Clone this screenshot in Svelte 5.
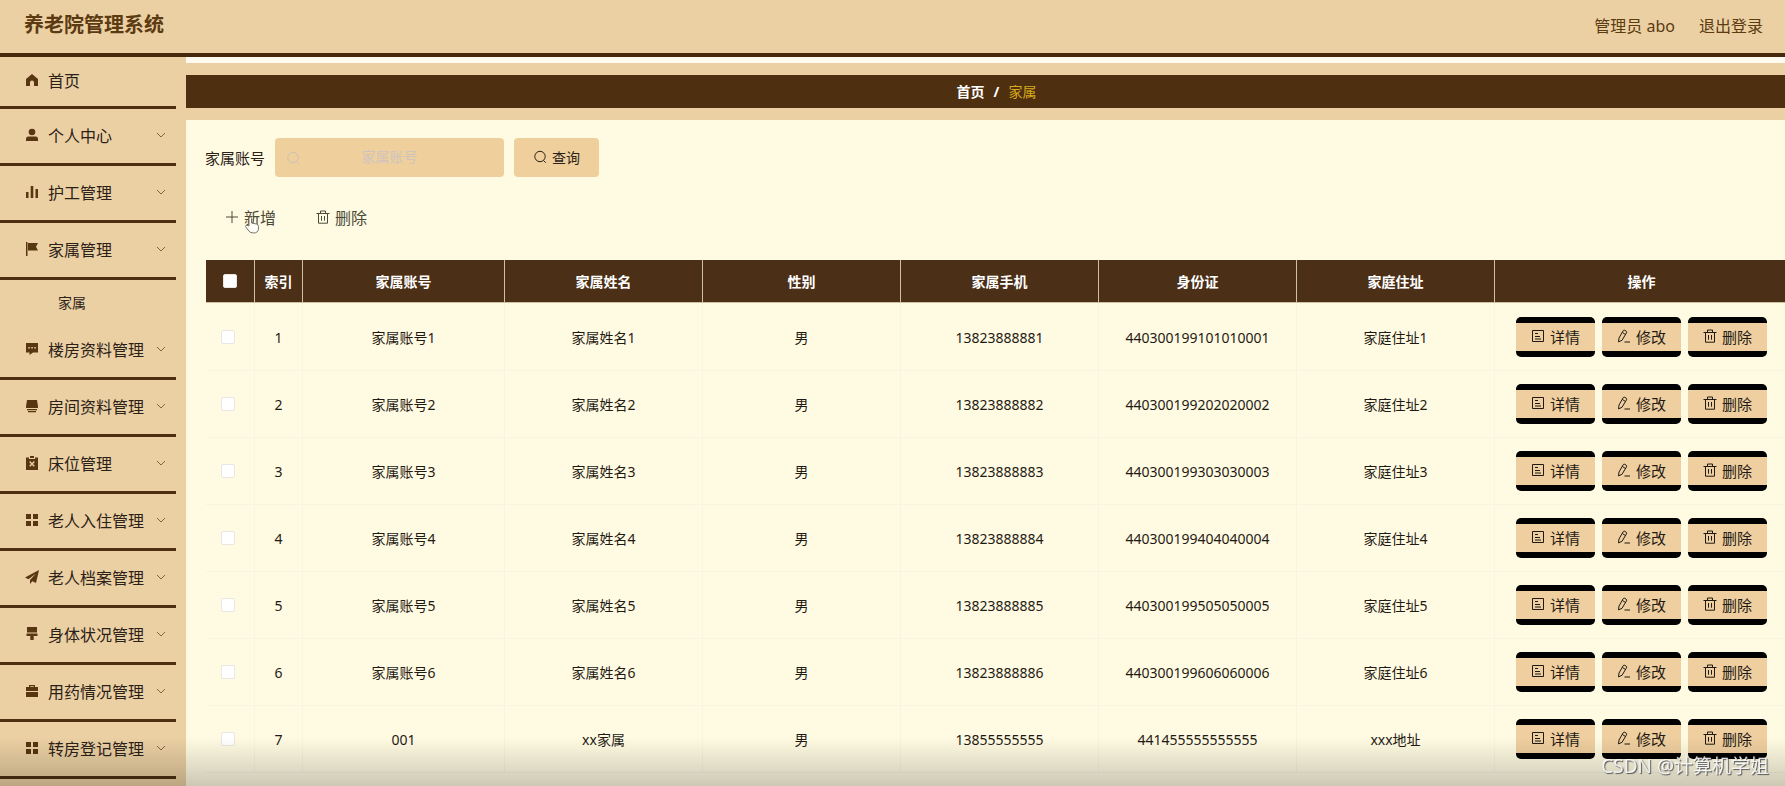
<script lang="ts">
  type MenuItem = { label: string; icon: string; children?: string[] };

  const home: MenuItem = { label: "首页", icon: "home" };

  const menu: MenuItem[] = [
    { label: "个人中心", icon: "user" },
    { label: "护工管理", icon: "chart" },
    { label: "家属管理", icon: "flag", children: ["家属"] },
    { label: "楼房资料管理", icon: "chat" },
    { label: "房间资料管理", icon: "room" },
    { label: "床位管理", icon: "clip" },
    { label: "老人入住管理", icon: "grid" },
    { label: "老人档案管理", icon: "plane" },
    { label: "身体状况管理", icon: "brush" },
    { label: "用药情况管理", icon: "case" },
    { label: "转房登记管理", icon: "grid" },
  ];

  const columns = ["家属账号", "家属姓名", "性别", "家属手机", "身份证", "家庭住址"];

  const rows = [
    ["家属账号1", "家属姓名1", "男", "13823888881", "440300199101010001", "家庭住址1"],
    ["家属账号2", "家属姓名2", "男", "13823888882", "440300199202020002", "家庭住址2"],
    ["家属账号3", "家属姓名3", "男", "13823888883", "440300199303030003", "家庭住址3"],
    ["家属账号4", "家属姓名4", "男", "13823888884", "440300199404040004", "家庭住址4"],
    ["家属账号5", "家属姓名5", "男", "13823888885", "440300199505050005", "家庭住址5"],
    ["家属账号6", "家属姓名6", "男", "13823888886", "440300199606060006", "家庭住址6"],
    ["001", "xx家属", "男", "13855555555", "441455555555555", "xxx地址"],
  ];

  let open = $state("家属管理");
  let account = $state("");
  let selected = $state(rows.map(() => false));
  let allSelected = $derived(selected.every(Boolean));

  function toggleAll() {
    const next = !allSelected;
    selected = rows.map(() => next);
  }

  function toggleMenu(item: MenuItem) {
    open = open === item.label ? "" : item.label;
  }
</script>

{#snippet menuIcon(name: string)}
  <svg class="menu-icon" viewBox="0 0 14 14" aria-hidden="true">
    {#if name === "home"}
      <path d="M7 1 1 6v7h4V9.500a2 2 0 0 1 4 0V13h4V6z" />
    {:else if name === "user"}
      <circle cx="7" cy="4" r="3.300" />
      <path d="M1 13v-2.200Q1 8.500 3.500 8.500h7q2.500 0 2.500 2.300V13z" />
    {:else if name === "chart"}
      <path d="M1 7h2.500v6H1zM5.700 1h2.600v12H5.700zM10.500 4H13v9h-2.500z" />
    {:else if name === "flag"}
      <path d="M1 0h1.500v14H1zM3 1h10l-2 3.700 2 3.800H3z" />
    {:else if name === "chat"}
      <path fill-rule="evenodd" d="M1 1h12v9.500H8L4.500 13v-2.500H1zM3.300 5v1.500h1.500V5zM6.300 5v1.500h1.500V5zM9.300 5v1.500h1.500V5z" />
    {:else if name === "room"}
      <path d="M2 1h10l1 6.500V9H1V7.500zM2 10h10v1.200H2zM3 12h8v1.300H3z" />
    {:else if name === "clip"}
      <path fill-rule="evenodd" d="M1 1.500h3V3h6V1.500h3V14H1zM4.200 6 6 7.900 4.200 9.800l1 1L7 8.900l1.800 1.900 1-1L8 7.900 9.800 6l-1-1L7 6.900 5.200 5z" />
      <path d="M5 0h4v2H5z" />
    {:else if name === "grid"}
      <path d="M1 1h5v5H1zM8 1h5v5H8zM1 8h5v5H1zM8 8h5v5H8z" />
    {:else if name === "plane"}
      <path d="M14 0 0 7.500l3.500 1.700L11 3.500 5 10v4l2.300-2.800L11 13z" />
    {:else if name === "brush"}
      <path d="M2 0h10v5.500H2zM1.500 6.500h11V9H8.700v4H5.300V9H1.500z" />
    {:else if name === "case"}
      <path fill-rule="evenodd" d="M4 3V1h6v2h3v4H1V3zM5.200 2.200V3h3.600v-.800zM1 8h12v5H1z" />
    {/if}
  </svg>
{/snippet}

{#snippet lineIcon(name: string)}
  <svg class="line-icon" viewBox="0 0 14 14" aria-hidden="true">
    {#if name === "search"}
      <circle cx="7" cy="6.500" r="5.200" />
      <path d="m10.500 10.500 2.200 2.200" />
    {:else if name === "plus"}
      <path d="M7 1v12M1 7h12" />
    {:else if name === "trash"}
      <path d="M.500 3.500h13M2.500 3.500v9.700h9V3.500M4.500 3.500V1h5v2.500M5.500 6v4.700M8.500 6v4.700" />
    {:else if name === "detail"}
      <path d="M1.500 1.500h11v11h-11zM4 4.500h3M4 7.500h5M4 10h6" />
    {:else if name === "edit"}
      <path d="M6.200 1.700Q6.800.800 7.800 1.300l1.400.900q.900.600.300 1.600L5 11.300l-3.500 1.600L2 9zM5.300 3.400l3 2M7.500 13H13" />
    {/if}
  </svg>
{/snippet}

<div class="page">
  <header class="topbar">
    <h1>养老院管理系统</h1>
    <div class="account">
      <span>管理员 abo</span>
      <a href="#logout">退出登录</a>
    </div>
  </header>

  <div class="body">
    <nav class="sidebar">
      <a class="menu-item first" href="#home">
        {@render menuIcon(home.icon)}
        <span>{home.label}</span>
      </a>
      {#each menu as item (item.label)}
        <button class="menu-item" aria-expanded={open === item.label} onclick={() => toggleMenu(item)}>
          {@render menuIcon(item.icon)}
          <span>{item.label}</span>
          <svg class="arrow" viewBox="0 0 10 6" aria-hidden="true"><path d="m1 1 4 4 4-4" /></svg>
        </button>
        {#if item.children && open === item.label}
          {#each item.children as child}
            <a class="sub-item" href="#family">{child}</a>
          {/each}
        {/if}
      {/each}
    </nav>

    <main>
      <div class="crumb-wrap">
        <div class="crumbs">
          <a href="#home">首页</a>
          <b>/</b>
          <span>家属</span>
        </div>
      </div>

      <section class="content">
        <form class="search" onsubmit={(event) => event.preventDefault()}>
          <label for="account">家属账号</label>
          <div class="field">
            {@render lineIcon("search")}
            <input id="account" type="text" placeholder="家属账号" bind:value={account} />
          </div>
          <button class="query" type="submit">{@render lineIcon("search")}查询</button>
        </form>

        <div class="tools">
          <button>{@render lineIcon("plus")}新增</button>
          <button>{@render lineIcon("trash")}删除</button>
          <svg class="pointer" viewBox="0 0 16 18" aria-hidden="true">
            <path d="M5 10V2.500Q5 1 6.200 1t1.300 1.500V7l5 1q2 .500 2 2.500V12q0 5-5 5-4 0-5.500-3L1.500 10.500q0-1.500 1.500-1.200z" />
          </svg>
        </div>

        <table>
          <colgroup>
            <col class="w-check" />
            <col class="w-index" />
            <col class="w-account" />
            <col span="5" />
            <col class="w-actions" />
          </colgroup>
          <thead>
            <tr>
              <th><input type="checkbox" aria-label="全选" checked={allSelected} onchange={toggleAll} /></th>
              <th>索引</th>
              {#each columns as column}
                <th>{column}</th>
              {/each}
              <th>操作</th>
            </tr>
          </thead>
          <tbody>
            {#each rows as row, i}
              <tr>
                <td class="check"><input type="checkbox" aria-label="选择 {i + 1}" bind:checked={selected[i]} /></td>
                <td>{i + 1}</td>
                {#each row as cell}
                  <td>{cell}</td>
                {/each}
                <td>
                  <div class="actions">
                    <button>{@render lineIcon("detail")}详情</button>
                    <button>{@render lineIcon("edit")}修改</button>
                    <button>{@render lineIcon("trash")}删除</button>
                  </div>
                </td>
              </tr>
            {/each}
          </tbody>
        </table>
      </section>
    </main>
  </div>

  <div class="shade"></div>
  <div class="watermark">CSDN @计算机学姐</div>
</div>

<style>
  :global(body) {
    background: #fffbe2;
  }

  .page {
    --tan: #ebd0a3;
    --sand: #efd09d;
    --brown: #4e3011;
    display: flex;
    flex-direction: column;
    min-height: 100vh;
    font-family: "Noto Sans", "Noto Sans CJK SC", sans-serif;
    font-size: 14px;
    color: #2b2118;
  }

  button,
  input {
    font: inherit;
    color: inherit;
    margin: 0;
  }

  button {
    cursor: pointer;
  }

  a {
    color: inherit;
    text-decoration: none;
  }

  .topbar {
    box-sizing: border-box;
    display: flex;
    align-items: center;
    justify-content: space-between;
    height: 57px;
    padding: 0 22px 4px 24px;
    background: var(--tan);
    border-bottom: 4px solid #46290c;
    color: #5c3a12;
  }

  h1 {
    margin: 0;
    font-size: 20px;
    line-height: 28px;
    font-weight: 700;
  }

  .account {
    display: flex;
    gap: 24px;
    font-size: 16px;
  }

  .body {
    display: flex;
    flex: 1;
  }

  .sidebar {
    box-sizing: border-box;
    flex: none;
    width: 186px;
    padding: 0 10px 0 0;
    background: var(--tan);
  }

  .menu-item {
    box-sizing: border-box;
    display: flex;
    align-items: center;
    gap: 9px;
    width: 100%;
    height: 57px;
    padding: 0 10px 2px 25px;
    border: 0;
    border-bottom: 3px solid var(--brown);
    background: none;
    font-size: 16px;
    text-align: left;
    white-space: nowrap;
  }

  .menu-item.first {
    height: 52px;
    padding-bottom: 4px;
  }

  .menu-icon {
    flex: none;
    width: 14px;
    height: 14px;
    fill: #573611;
  }

  .arrow {
    width: 10px;
    height: 6px;
    margin-left: auto;
    fill: none;
    stroke: #85673f;
  }

  .sub-item {
    display: block;
    height: 43px;
    padding-left: 58px;
    line-height: 46px;
  }

  main {
    flex: 1;
    min-width: 0;
    border-top: 6px solid #fffaf0;
  }

  .crumb-wrap {
    padding: 12px 0;
    background: var(--tan);
  }

  .crumbs {
    display: flex;
    align-items: center;
    justify-content: center;
    gap: 9px;
    height: 33px;
    padding-left: 22px;
    background: var(--brown);
    color: #fff;
    line-height: 18px;
  }

  .crumbs a {
    font-weight: 700;
  }

  .crumbs span {
    color: #d9a91c;
  }

  .content {
    padding: 18px 0 0 19px;
  }

  .search {
    display: flex;
    align-items: center;
    gap: 10px;
  }

  .search label {
    font-size: 15px;
  }

  .line-icon {
    flex: none;
    width: 14px;
    height: 14px;
    fill: none;
    stroke: currentColor;
  }

  .field {
    position: relative;
    width: 229px;
  }

  .field .line-icon {
    position: absolute;
    top: 13px;
    left: 11px;
    color: #c9c0bb;
  }

  .field input {
    box-sizing: border-box;
    display: block;
    width: 100%;
    height: 39px;
    padding: 0 30px 2px;
    border: 0;
    border-radius: 4px;
    background: var(--sand);
    text-align: center;
  }

  .field input::placeholder {
    color: #cfc3bd;
    opacity: 1;
  }

  .query {
    display: flex;
    align-items: center;
    justify-content: center;
    gap: 5px;
    width: 85px;
    height: 39px;
    padding: 0 0 2px;
    border: 0;
    border-radius: 4px;
    background: var(--sand);
  }

  .tools {
    position: relative;
    display: flex;
    gap: 40px;
    padding: 20px;
  }

  .tools button {
    display: flex;
    align-items: center;
    gap: 5px;
    height: 43px;
    padding: 0 0 3px;
    border: 0;
    background: none;
    color: #4b4a39;
    font-size: 16px;
  }

  .pointer {
    position: absolute;
    top: 39px;
    left: 39px;
    width: 16px;
    height: 18px;
    fill: #fffef8;
    stroke: #77756a;
  }

  table {
    width: 100%;
    padding-left: 1px;
    table-layout: fixed;
    border-collapse: separate;
    border-spacing: 0;
    text-align: center;
  }

  .w-check {
    width: 49px;
  }

  .w-index {
    width: 48px;
  }

  .w-account {
    width: 202px;
  }

  .w-actions {
    width: 290px;
  }

  th {
    height: 42px;
    padding: 0;
    background: #4b2f17;
    border-right: 1px solid #cfc0a4;
    border-bottom: 1px solid #cfc0a4;
    color: #fff;
    font-weight: 700;
  }

  td {
    height: 66px;
    padding: 0;
    border-right: 1px solid #f8f4e0;
    border-bottom: 1px solid #f8f4e0;
    color: #1f1a14;
  }

  tbody tr:first-child td {
    border-top: 1px solid transparent;
  }

  th:last-child,
  td:last-child {
    padding-left: 3px;
    border-right: 0;
  }

  .check {
    padding-right: 4px;
  }

  input[type="checkbox"] {
    appearance: none;
    display: block;
    box-sizing: border-box;
    width: 14px;
    height: 14px;
    margin: 0 auto;
    border: 1px solid #ebe6e2;
    border-radius: 2px;
    background: #fff;
  }

  input[type="checkbox"]:checked {
    background: #c98f3a;
  }

  .actions {
    display: flex;
    justify-content: center;
    gap: 7px;
  }

  .actions button {
    box-sizing: border-box;
    display: flex;
    align-items: center;
    justify-content: center;
    gap: 5px;
    width: 79px;
    height: 40px;
    padding: 0 0 2px;
    border: 0;
    border-top: 6px solid #000;
    border-bottom: 6px solid #000;
    border-radius: 5px;
    background: #efcf9f;
    font-size: 15px;
  }

  .shade {
    position: fixed;
    inset: auto 0 0 0;
    height: 48px;
    background: linear-gradient(transparent, rgba(0, 0, 0, 0.2));
    pointer-events: none;
  }

  .watermark {
    position: fixed;
    right: 16px;
    bottom: 6px;
    color: rgba(255, 255, 255, 0.85);
    font-size: 19px;
    line-height: 28px;
    text-shadow: 1px 1px 1px #555;
    pointer-events: none;
  }
</style>
